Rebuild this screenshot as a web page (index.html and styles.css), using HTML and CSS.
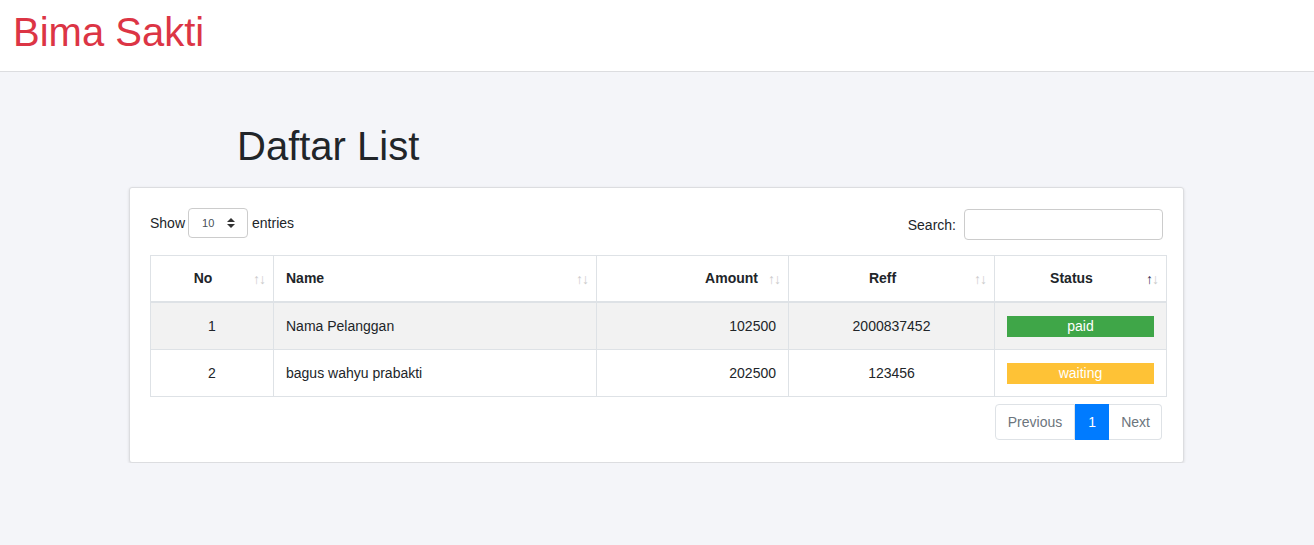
FILE: index.html
```html
<!DOCTYPE html>
<html lang="id">
<head>
    <meta charset="UTF-8">
    <meta name="viewport" content="width=device-width, initial-scale=1.0">
    <title>Bima Sakti - Daftar List</title>
    <link rel="stylesheet" href="styles.css">
</head>
<body>
    <!-- Navbar -->
    <header class="navbar">
        <span class="brand">Bima Sakti</span>
    </header>

    <main class="content">
        <h1 class="page-title">Daftar List</h1>

        <div class="card">
            <!-- Kontrol tabel -->
            <div class="table-top">
                <label class="length">Show
                    <span class="select">10
                        <svg class="caret" width="8" height="12" viewBox="0 0 8 12"><path d="M0 5 L4 1 L8 5 Z M0 7 L8 7 L4 11 Z" fill="#333"/></svg>
                    </span>
                    entries</label>
                <label class="search">Search: <input type="text"></label>
            </div>

            <table class="data-table">
                <thead>
                    <tr>
                        <th class="c-no">No<span class="sort">↑↓</span></th>
                        <th class="c-name">Name<span class="sort">↑↓</span></th>
                        <th class="c-amount">Amount<span class="sort">↑↓</span></th>
                        <th class="c-reff">Reff<span class="sort">↑↓</span></th>
                        <th class="c-status">Status<span class="sort"><b>↑</b>↓</span></th>
                    </tr>
                </thead>
                <tbody>
                    <tr class="odd">
                        <td class="c-no">1</td>
                        <td class="c-name">Nama Pelanggan</td>
                        <td class="c-amount">102500</td>
                        <td class="c-reff">2000837452</td>
                        <td class="c-status"><span class="badge paid">paid</span></td>
                    </tr>
                    <tr>
                        <td class="c-no">2</td>
                        <td class="c-name">bagus wahyu prabakti</td>
                        <td class="c-amount">202500</td>
                        <td class="c-reff">123456</td>
                        <td class="c-status"><span class="badge waiting">waiting</span></td>
                    </tr>
                </tbody>
            </table>

            <div class="pager">
                <a class="page-btn">Previous</a>
                <a class="page-btn active">1</a>
                <a class="page-btn">Next</a>
            </div>
        </div>
    </main>
</body>
</html>
```

FILE: styles.css
```css
/* Umum */
body {
    margin: 0;
    font-family: 'Liberation Sans', Arial, sans-serif;
    font-size: 14px;
    color: #212529;
    background-color: #f4f5f9;
}

/* Navbar */
.navbar {
    height: 72px;
    background-color: #fff;
    border-bottom: 1px solid #dcdde0;
    padding-left: 13px;
    box-sizing: border-box;
}

.brand {
    display: inline-block;
    color: #dc3545;
    font-size: 40px;
    line-height: 64px;
}

/* Konten */
.content {
    width: 1055px;
    margin-left: 129px;
    padding-top: 50px;
}

.page-title {
    margin: 0 0 17px 108px;
    font-size: 40px;
    font-weight: 400;
    line-height: 48px;
}

.card {
    background-color: #fff;
    border: 1px solid #dcdde0;
    border-radius: 3px;
    box-shadow: 0 1px 3px rgba(0, 0, 0, 0.12);
    padding: 20px 17px 22px 20px;
}

/* Kontrol atas */
.table-top {
    display: flex;
    justify-content: space-between;
    align-items: flex-start;
    margin-bottom: 15px;
}

.length {
    display: flex;
    align-items: center;
    gap: 3px;
}

.select {
    display: inline-flex;
    align-items: center;
    justify-content: space-between;
    width: 60px;
    height: 30px;
    box-sizing: border-box;
    border: 1px solid #ccc;
    border-radius: 4px;
    padding: 0 12px 0 13px;
    margin-right: 1px;
    font-size: 11px;
    color: #495057;
}

.caret {
    display: block;
}

.search {
    display: flex;
    align-items: center;
    gap: 8px;
    margin-right: 3px;
    margin-top: 1px;
}

.search input {
    width: 199px;
    height: 31px;
    box-sizing: border-box;
    border: 1px solid #ccc;
    border-radius: 4px;
}

/* Tabel */
.data-table {
    width: 1016px;
    border-collapse: collapse;
    table-layout: fixed;
}

.data-table th,
.data-table td {
    box-sizing: border-box;
    border: 1px solid #dee2e6;
    padding: 12px;
    line-height: 21px;
}

.data-table td {
    line-height: 22px;
}

.data-table th {
    position: relative;
    font-weight: bold;
    padding-right: 30px;
    border-bottom: 2px solid #dee2e6;
}

.sort {
    position: absolute;
    right: 8px;
    top: 13px;
    font-size: 14px;
    font-weight: normal;
    color: #ccc;
    letter-spacing: -1px;
}

.sort b {
    font-weight: normal;
    color: #335;
}

.c-no { width: 123px; text-align: center; }
.c-name { width: 323px; text-align: left; }
.c-amount { width: 192px; text-align: right; }
.c-reff { width: 206px; text-align: center; }
.c-status { width: 172px; text-align: center; }

.odd td {
    background-color: #f2f2f2;
}

.badge {
    display: block;
    height: 21px;
    line-height: 21px;
    color: #fff;
    font-size: 14px;
}

.paid { background-color: #3fa648; }
.waiting { background-color: #fec236; }

/* Paginasi */
.pager {
    display: flex;
    justify-content: flex-end;
    margin-top: 7px;
    margin-right: 4px;
}

.page-btn {
    display: inline-block;
    height: 36px;
    line-height: 34px;
    box-sizing: border-box;
    padding: 0 12px;
    border: 1px solid #dee2e6;
    color: #6c757d;
    cursor: pointer;
}

.page-btn:first-child {
    border-radius: 4px 0 0 4px;
}

.page-btn:last-child {
    border-radius: 0 4px 4px 0;
    border-left: none;
    padding: 0 11px 0 12px;
}

.page-btn.active {
    background-color: #007bff;
    border-color: #007bff;
    color: #fff;
    width: 34px;
    text-align: center;
    padding: 0;
}
```
